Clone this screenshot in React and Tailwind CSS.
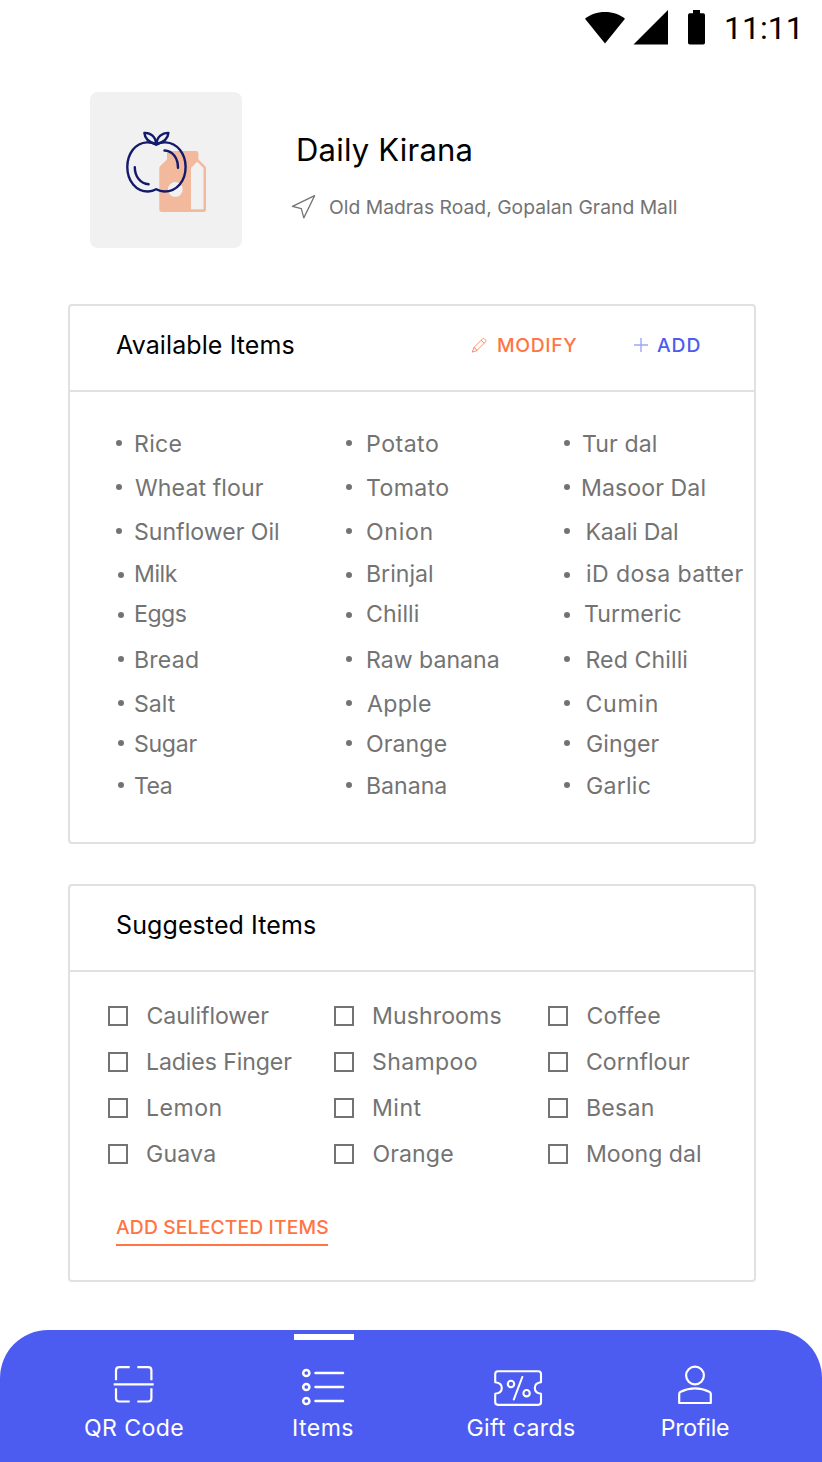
import React from "react";

const availableColumns = [
  {
    className: "w-[230px]",
    items: [
      { name: "Rice", bullet: "mt-[11px]", text: "ml-3 tracking-[0.3px]" },
      { name: "Wheat flour", bullet: "mt-[11px]", text: "ml-[13px] tracking-[0.1px]" },
      { name: "Sunflower Oil", bullet: "mt-[11px]", text: "ml-3" },
      { name: "Milk", bullet: "mt-[13px] ml-0.5", text: "ml-2.5 tracking-[-0.45px]" },
      { name: "Eggs", bullet: "mt-[13px] ml-0.5", text: "ml-2.5 tracking-[-0.5px]" },
      { name: "Bread", bullet: "mt-[11px] ml-0.5", text: "ml-2.5 tracking-[0.2px]" },
      { name: "Salt", bullet: "mt-[11px] ml-0.5", text: "ml-2.5" },
      { name: "Sugar", bullet: "mt-[11px] ml-0.5", text: "ml-2.5 tracking-[-0.3px]" },
      { name: "Tea", bullet: "mt-[11px] ml-0.5", text: "ml-2.5 tracking-[-0.55px]" },
    ],
  },
  {
    className: "w-[218px]",
    items: [
      { name: "Potato", bullet: "mt-[11px]", text: "ml-3.5 tracking-[0.5px]" },
      { name: "Tomato", bullet: "mt-[11px]", text: "ml-3.5 tracking-[0.35px]" },
      { name: "Onion", bullet: "mt-[11px]", text: "ml-3.5 tracking-[0.7px]" },
      { name: "Brinjal", bullet: "mt-[13px]", text: "ml-3.5" },
      { name: "Chilli", bullet: "mt-[13px]", text: "ml-3.5 tracking-[0.1px]" },
      { name: "Raw banana", bullet: "mt-[11px]", text: "ml-3.5" },
      { name: "Apple", bullet: "mt-[11px]", text: "ml-[15px] tracking-[0.3px]" },
      { name: "Orange", bullet: "mt-[11px]", text: "ml-3.5 tracking-[0.1px]" },
      { name: "Banana", bullet: "mt-[11px]", text: "ml-3.5" },
    ],
  },
  {
    className: "w-[190px]",
    items: [
      { name: "Tur dal", bullet: "mt-[11px]", text: "ml-3 tracking-[0.1px]" },
      { name: "Masoor Dal", bullet: "mt-[11px]", text: "ml-[11px] tracking-[0.1px]" },
      { name: "Kaali Dal", bullet: "mt-[11px]", text: "ml-[15.500px] tracking-[-0.15px]" },
      { name: "iD dosa batter", bullet: "mt-[13px]", text: "ml-4 tracking-[0.38px]" },
      { name: "Turmeric", bullet: "mt-[13px]", text: "ml-3.5 tracking-[0.05px]" },
      { name: "Red Chilli", bullet: "mt-[11px]", text: "ml-[15.500px] tracking-[0.1px]" },
      { name: "Cumin", bullet: "mt-[11px]", text: "ml-[15.500px] tracking-[0.7px]" },
      { name: "Ginger", bullet: "mt-[11px]", text: "ml-4 tracking-[0.1px]" },
      { name: "Garlic", bullet: "mt-[11px]", text: "ml-4 tracking-[0.25px]" },
    ],
  },
];

const suggestedItems = [
  { name: "Cauliflower", text: "ml-[18.500px] tracking-[-0.05px]" },
  { name: "Mushrooms", text: "ml-[18px] tracking-[0.1px]" },
  { name: "Coffee", text: "ml-[18.500px] tracking-[0.2px]" },
  { name: "Ladies Finger", text: "ml-[18px] tracking-[-0.1px]" },
  { name: "Shampoo", text: "ml-[18px] tracking-[0.35px]" },
  { name: "Cornflour", text: "ml-[18px]" },
  { name: "Lemon", text: "ml-[18px] tracking-[0.5px]" },
  { name: "Mint", text: "ml-[18px] tracking-[0.5px]" },
  { name: "Besan", text: "ml-[18px] tracking-[0.25px]" },
  { name: "Guava", text: "ml-[18px] tracking-[0.2px]" },
  { name: "Orange", text: "ml-[18.500px] tracking-[0.1px]" },
  { name: "Moong dal", text: "ml-[18px]" },
];

function StatusBar() {
  return (
    <div className="flex h-14 items-start justify-end pr-5">
      <svg className="mt-2 h-10 w-[124px]" viewBox="584 8 124 40" aria-hidden="true">
        <path d="M585 18.8C590 14.5 597 12 605 12s15 2.500 20 6.800L605 43.500z" />
        <path d="M633.500 44.500 668 10v34.500z" />
        <path d="M693 10h7v3.200h3.200q1.800 0 1.800 1.800v27.700q0 1.800-1.800 1.800h-13.400q-1.800 0-1.800-1.800V15q0-1.800 1.800-1.800H693z" />
      </svg>
      <span className="mt-2 ml-4 w-[78px] whitespace-nowrap font-['Roboto',sans-serif] text-[32px] leading-10">11:11</span>
    </div>
  );
}

function StoreLogo() {
  return (
    <div className="h-[156px] w-[152px] rounded-lg bg-[#f1f1f1]">
      <svg className="size-full" viewBox="90 92 152 156" fill="none" aria-hidden="true">
        <path
          fill="#f3b99d"
          fillRule="evenodd"
          d="M169.500 151H196q2.400 0 2.400 2.400v6l6.600 6.600q1 1 1 2.400V209.500q0 2.500-2.500 2.500h-41.600q-2.600 0-2.600-2.500V168.500q0-1.400 1-2.400l6.700-6.700v-6q0-2.400 2.500-2.400zM197.200 161.800l-6.200 6.200v41.300h12.500V168zM175.300 182a7.400 7.400 0 1 0 0 14.800a7.400 7.400 0 1 0 0-14.800z"
        />
        <g stroke="#131a6b" strokeWidth="2.400" strokeLinecap="round" strokeLinejoin="round">
          <path d="M156.200 144.600C153 143 150 142.300 147 142.400C135 143 127.300 154 127.300 167C127.300 181 136 191.500 148 191.500C151.500 191.500 154 190.500 156.200 189.200C158.500 190.500 161 191.500 164.500 191.500C177 191.500 185.600 181 185.600 167C185.600 154 177.500 143 165.500 142.400C162 142.300 159 143 156.200 144.600z" />
          <path d="M156 144.200C149.500 142.500 144.800 139 144.400 132.900C150.500 132.500 156 137 156 144.200z" />
          <path d="M156.600 144.200C163.100 142.500 168 139 168.400 132.900C162.500 132.500 156.600 137 156.600 144.200z" />
          <path d="M164.500 150.500C172.500 150.700 178 158 178 167.700" />
          <path d="M134.800 167.200C134.800 176.500 140.500 184 148.600 184.200" />
        </g>
      </svg>
    </div>
  );
}

function Card({ title, actions, className, children }) {
  return (
    <section className={`ml-[68px] flex w-[688px] flex-col rounded border-2 border-[#e1e1e1] ${className}`}>
      <header className="flex h-[86px] items-start border-b-2 border-[#e1e1e1] pl-[46px]">
        <h2 className="mt-[19px] flex-1 text-[25px] leading-10 tracking-[0.1px] text-black">{title}</h2>
        {actions}
      </header>
      {children}
    </section>
  );
}

function CardActions() {
  return (
    <div className="mt-6 flex items-center pr-[52px] text-[19.3px] leading-[30px] font-medium">
      <button className="flex items-center text-[#ff7543]">
        <svg className="mr-2.5 size-4" viewBox="0 0 16 16" fill="none" stroke="currentColor" strokeWidth="0.8" strokeLinejoin="round" aria-hidden="true">
          <path d="M1.300 15.100 2.800 10.600 11.600 1.800Q12.500 1 13.400 1.800L14.600 3Q15.400 3.900 14.600 4.800L5.800 13.600zM2.800 10.600q1.900.1 1.700 1.500q1.300-.1 1.300 1.500M10.200 3.200l3 3" />
        </svg>
        <span className="w-[80px] text-left tracking-[0.65px]">MODIFY</span>
      </button>
      <button className="ml-[56px] flex items-center text-[#4d5cf0]">
        <svg className="mr-2 size-4" viewBox="0 0 16 16" fill="none" stroke="currentColor" strokeWidth="1.400" strokeOpacity="0.55" aria-hidden="true">
          <path d="M8 1v14M1 8h14" />
        </svg>
        <span className="w-[45px] text-left tracking-[0.9px]">ADD</span>
      </button>
    </div>
  );
}

function ScanIcon() {
  return (
    <svg className="h-11 w-12" viewBox="110 1363 48 44" fill="none" stroke="white" strokeWidth="2.200" aria-hidden="true">
      <path d="M116 1380.300V1370.500q0-3.300 3.300-3.300H129.700M137.300 1367.200h10.900q3.200 0 3.200 3.200v9.900M116 1388.300v9.900q0 3.300 3.300 3.300H129.700M137.300 1401.500h10.900q3.200 0 3.200-3.200v-10M113.700 1384.300h40" />
    </svg>
  );
}

function ListIcon() {
  return (
    <svg className="h-11 w-12" viewBox="299 1363 48 44" fill="none" stroke="white" strokeWidth="2.500" strokeLinecap="round" aria-hidden="true">
      <circle cx="306.300" cy="1373" r="3.100" />
      <circle cx="306.300" cy="1387" r="3.100" />
      <circle cx="306.300" cy="1401" r="3.100" />
      <path d="M315.500 1373h27.500M315.500 1387h27.500M315.500 1401h27.500" />
    </svg>
  );
}

function VoucherIcon() {
  return (
    <svg className="h-11 w-[54px] -translate-x-[3px]" viewBox="491 1363 54 44" fill="none" stroke="white" strokeWidth="2.100" strokeLinecap="round" strokeLinejoin="round" aria-hidden="true">
      <path d="M498 1371.200H538.200q2.800 0 2.800 2.800v8.300q-6.200.7-6.200 5.700t6.200 5.700v8.400q0 2.800-2.800 2.800H498q-2.800 0-2.800-2.800v-8.400q6.600-.7 6.600-5.700t-6.600-5.700V1374q0-2.800 2.800-2.800zM522.300 1377l-8.500 22.500" />
      <circle cx="511" cy="1384" r="3.200" />
      <circle cx="526.600" cy="1393.200" r="3.200" />
    </svg>
  );
}

function PersonIcon() {
  return (
    <svg className="h-11 w-12" viewBox="671 1363 48 44" fill="none" stroke="white" strokeWidth="2.200" strokeLinejoin="round" aria-hidden="true">
      <circle cx="695" cy="1375.500" r="8.900" />
      <path d="M679.200 1403V1394q0-1.500 1.500-2.200Q687.500 1388.300 695 1388.300t14.300 3.500q1.500.7 1.500 2.200V1403z" />
    </svg>
  );
}

const tabs = [
  { label: "QR Code", Icon: ScanIcon, place: "ml-[74px]", text: "tracking-[0.4px]", bar: "" },
  { label: "Items", Icon: ListIcon, place: "ml-[69px]", text: "tracking-[0.4px]", bar: "translate-x-px bg-white" },
  { label: "Gift cards", Icon: VoucherIcon, place: "ml-[78px]", text: "tracking-[0.35px]", bar: "" },
  { label: "Profile", Icon: PersonIcon, place: "ml-[54px]", text: "tracking-[-0.2px]", bar: "" },
];

export default function App() {
  return (
    <div className="flex h-[1462px] w-[822px] flex-col overflow-hidden bg-white font-['Inter',sans-serif] text-black">
      <StatusBar />

      <header className="mt-9 flex h-[156px] pl-[90px]">
        <StoreLogo />
        <div className="ml-[50px]">
          <h1 className="mt-[37px] ml-1 text-[31px] leading-[42px] tracking-[0.2px]">Daily Kirana</h1>
          <div className="mt-[21px] flex items-center text-[19.3px] leading-[30px] tracking-[0.02px] text-[#737373]">
            <svg className="mr-3 -ml-px h-[26px] w-[26px]" viewBox="291 195 26 26" fill="none" stroke="currentColor" strokeWidth="1.300" strokeLinejoin="round" aria-hidden="true">
              <path d="M314.600 196.700 303.800 218.900 301.300 209.700 292.500 207.300z" />
            </svg>
            <span>Old Madras Road, Gopalan Grand Mall</span>
          </div>
        </div>
      </header>

      <Card title="Available Items" actions={<CardActions />} className="mt-14 h-[540px]">
        <div className="mt-[37px] flex pl-[46px] text-[23.100px] leading-[30px] text-[#737373]">
          {availableColumns.map((column) => (
            <ul
              key={column.items[0].name}
              className={`grid shrink-0 grid-rows-[44px_44px_42px_40px_46px_44px_40px_42px_30px] ${column.className}`}
            >
              {column.items.map((item) => (
                <li key={item.name} className="flex items-start whitespace-nowrap">
                  <span className={`size-1.5 shrink-0 rounded-full bg-[#737373] ${item.bullet}`} />
                  <span className={item.text}>{item.name}</span>
                </li>
              ))}
            </ul>
          ))}
        </div>
      </Card>

      <Card title="Suggested Items" className="mt-10 h-[398px]">
        <ul className="mt-7 grid auto-rows-[46px] grid-cols-[226px_214px_170px] pl-[38px] text-[23.100px] leading-8 text-[#737373]">
          {suggestedItems.map((item) => (
            <li key={item.name} className="flex h-8 items-center whitespace-nowrap">
              <span className="size-5 shrink-0 border-2 border-[#737373]" />
              <span className={item.text}>{item.name}</span>
            </li>
          ))}
        </ul>
        <button className="mt-[27px] ml-[46px] h-[35px] w-[212px] border-b-2 border-[#ff7543] text-left text-[19.3px] leading-[31px] font-medium tracking-[0.15px] whitespace-nowrap text-[#ff7543]">
          ADD SELECTED ITEMS
        </button>
      </Card>

      <nav className="mt-12 flex h-[132px] shrink-0 rounded-t-[48px] bg-[#4d5cf0] text-[23.100px] text-white">
        {tabs.map(({ label, Icon, place, text, bar }) => (
          <div key={label} className={`flex w-[120px] shrink-0 flex-col items-center ${place}`}>
            <span className={`mt-1 mb-[23px] h-1.5 w-[60px] ${bar}`} />
            <Icon />
            <span className={`mt-1.5 leading-[30px] whitespace-nowrap ${text}`}>{label}</span>
          </div>
        ))}
      </nav>
    </div>
  );
}
